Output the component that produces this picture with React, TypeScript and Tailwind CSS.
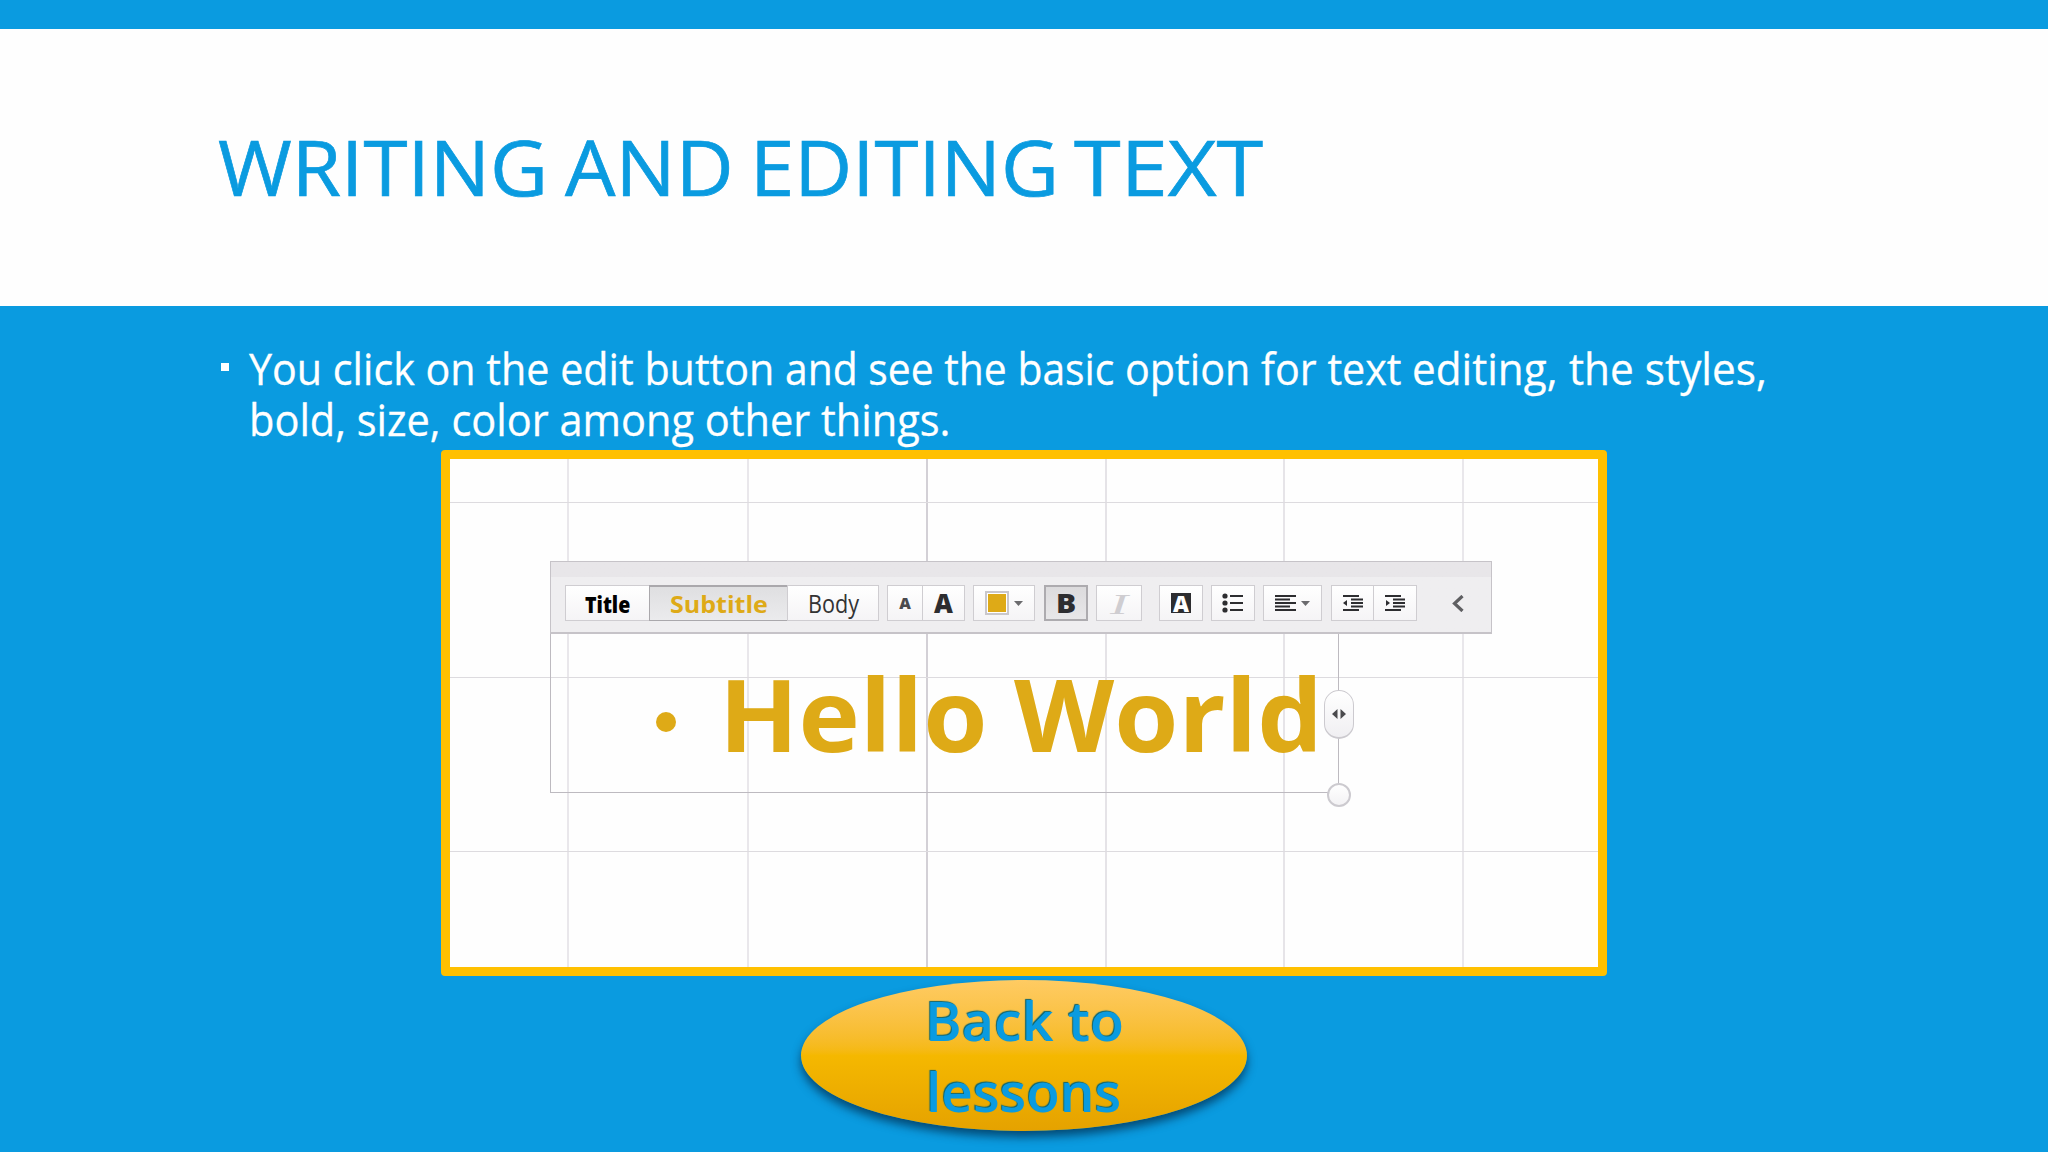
import { useLayoutEffect, useRef, useState } from "react";
import type { ReactNode } from "react";

/** A run of text stretched or condensed horizontally to an exact width. */
function Fit({ width, className = "", children }: { width: number; className?: string; children: ReactNode }) {
  const ref = useRef<HTMLSpanElement>(null);
  const [scale, setScale] = useState(1);
  useLayoutEffect(() => {
    const measure = () => {
      if (ref.current) setScale(width / ref.current.offsetWidth);
    };
    measure();
    document.fonts?.ready.then(measure);
  }, [width]);
  return (
    <span className="block shrink-0" style={{ width }}>
      <span ref={ref} className={`inline-block origin-left whitespace-nowrap ${className}`} style={{ transform: `scaleX(${scale})` }}>
        {children}
      </span>
    </span>
  );
}

const BTN = "flex h-full items-center justify-center border border-[#cfcdd1] bg-linear-to-b from-white to-[#f5f4f6]";
const VLINES = ["left-[117px] bg-[#e9e7eb]", "left-[297px] bg-[#e9e7eb]", "left-[476px] bg-[#d3d0d6]", "left-[655px] bg-[#e5e3e7]", "left-[833px] bg-[#e6e4e8]", "left-[1012px] bg-[#e9e7eb]"];
const HLINES = ["top-[43px]", "top-[218px]", "top-[392px]"];

function Toolbar() {
  return (
    <div className="absolute left-[100px] top-[102px] flex h-[73px] w-[942px] border border-[#c6c3c8] border-b-2 bg-linear-to-b from-[#e8e6e9] from-[21%] to-[#efeef0] to-[22%] pl-[14px] pt-[23px]">
      <div className="flex h-[36px] font-['Open_Sans'] text-[#2d2d30]">
        <div className={`${BTN} w-[85px]`}>
          <Fit width={45} className="translate-y-px text-[23px] font-extrabold text-black">Title</Fit>
        </div>
        <div className="-ml-px flex h-full w-[139px] items-center justify-center border border-t-2 border-[#aaa8ac] bg-linear-to-b from-[#dfdfe1] to-[#ebebed]">
          <Fit width={98} className="text-[24px] font-bold text-[#deaa17]">Subtitle</Fit>
        </div>
        <div className={`${BTN} -ml-px w-[92px]`}>
          <Fit width={51} className="translate-y-px text-[25px] text-[#333]">Body</Fit>
        </div>
        <div className={`${BTN} ml-[8px] w-[36px] text-[16px] font-extrabold text-[#4a4a4d]`}>A</div>
        <div className={`${BTN} -ml-px w-[43px] text-[26px] font-extrabold`}>A</div>
        <div className={`${BTN} ml-[8px] w-[62px] gap-[5px]`}>
          <div className="size-[24px] border-2 border-[#c9c7cb] bg-white p-px">
            <div className="size-full bg-[#deaa17]" />
          </div>
          <svg className="h-[5px] w-[9px]" viewBox="0 0 9 5"><path d="M0 0h9L4.5 5z" fill="#6b6b6e" /></svg>
        </div>
        <div className="ml-[9px] flex h-full w-[44px] items-center justify-center border-2 border-[#adabaf] bg-linear-to-b from-[#dcdbdd] to-[#e8e7e9]">
          <Fit width={20} className="text-[27px] font-extrabold">B</Fit>
        </div>
        <div className={`${BTN} ml-[8px] w-[46px]`}>
          <Fit width={18} className="font-['Liberation_Serif'] text-[30px] italic text-[#cfcdd1]">I</Fit>
        </div>
        <div className={`${BTN} ml-[17px] w-[44px]`}>
          <div className="flex size-[20px] items-center justify-center bg-[#2d2d30] text-[22px] leading-none font-extrabold text-white">A</div>
        </div>
        <div className={`${BTN} ml-[8px] w-[44px]`}>
          <svg className="h-[20px] w-[22px]" viewBox="0 0 22 20" stroke="#2d2d30" strokeWidth="2" fill="#2d2d30">
            <path d="M8 3h13M8 10h13M8 17h13" />
            <g stroke="none"><circle cx="3" cy="3" r="2.6" /><circle cx="3" cy="10" r="2.6" /><circle cx="3" cy="17" r="2.6" /></g>
          </svg>
        </div>
        <div className={`${BTN} ml-[8px] w-[59px] gap-[5px]`}>
          <svg className="h-[16px] w-[21px]" viewBox="0 0 21 16" stroke="#2d2d30" strokeWidth="1.8">
            <path d="M0 1h21M0 4.5h15M0 8h21M0 11.5h15M0 15h21" />
          </svg>
          <svg className="h-[5px] w-[9px]" viewBox="0 0 9 5"><path d="M0 0h9L4.5 5z" fill="#6b6b6e" /></svg>
        </div>
        <div className={`${BTN} ml-[9px] w-[43px]`}>
          <svg className="h-[16px] w-[22px]" viewBox="0 0 22 16" stroke="#2d2d30" strokeWidth="1.8">
            <path d="M1 1h16M9 4.5h12M9 8h12M9 11.5h12M1 15h16" />
            <path d="M5 5v6L1 8z" stroke="none" fill="#2d2d30" />
          </svg>
        </div>
        <div className={`${BTN} -ml-px w-[44px]`}>
          <svg className="h-[16px] w-[22px]" viewBox="0 0 22 16" stroke="#2d2d30" strokeWidth="1.8">
            <path d="M1 1h16M9 4.5h12M9 8h12M9 11.5h12M1 15h16" />
            <path d="M2 5v6l4-3z" stroke="none" fill="#2d2d30" />
          </svg>
        </div>
        <div className="ml-[35px] flex items-center">
          <svg className="h-[17px] w-[12px]" viewBox="0 0 12 17" fill="none" stroke="#5f5f62" strokeWidth="3.2"><path d="M10.500 1 2.500 8.500l8 7.500" /></svg>
        </div>
      </div>
    </div>
  );
}

function Editor() {
  return (
    <div className="relative ml-[441px] h-[526px] w-[1166px] shrink-0 overflow-hidden rounded-[4px] border-[9px] border-[#ffc000] bg-[#fefefe]">
      {VLINES.map((c) => <div key={c} className={`absolute inset-y-0 w-[2px] ${c}`} />)}
      {HLINES.map((c) => <div key={c} className={`absolute inset-x-0 h-px bg-[#dddbdf] ${c}`} />)}
      <div className="absolute left-[100px] top-[174px] h-[160px] w-[789px] border border-[#bdbac0]" />
      <div className="absolute left-[206px] top-[253px] size-[20px] rounded-full bg-[#deaa17]" />
      <div className="absolute left-[269px] top-[185px] flex font-['Open_Sans'] text-[101px] leading-[138px] font-bold text-[#deaa17]">
        <Fit width={295}>Hello&nbsp;</Fit>
        <Fit width={309}>World</Fit>
      </div>
      <Toolbar />
      <div className="absolute left-[874px] top-[231px] flex h-[49px] w-[30px] items-center justify-center rounded-full border border-b-2 border-[#cccacf] bg-linear-to-b from-white to-[#f0eff2]">
        <svg className="h-[10px] w-[14px]" viewBox="0 0 14 10" fill="#4a4a4d"><path d="M5.500 0v10L0 5zM8.500 0v10L14 5z" /></svg>
      </div>
      <div className="absolute left-[877px] top-[324px] size-[24px] rounded-full border-2 border-[#cccacf] bg-linear-to-b from-white to-[#f3f2f4]" />
    </div>
  );
}

export default function App() {
  return (
    <main className="flex h-[1152px] w-[2048px] flex-col overflow-hidden bg-[#0a9be0] font-['Open_Sans',sans-serif]">
      <header className="mt-[29px] h-[277px] shrink-0 bg-[#fefefe] pl-[218px] pt-[84px]">
        <h1 className="flex text-[77.5px] leading-[106px] text-[#0a9be0] [-webkit-text-stroke:0.7px_#0a9be0]">
          <Fit width={330}>WRITING</Fit>
          <Fit width={17}>&nbsp;</Fit>
          <Fit width={169}>AND</Fit>
          <Fit width={16}>&nbsp;</Fit>
          <Fit width={309}>EDITING</Fit>
          <Fit width={15}>&nbsp;</Fit>
          <Fit width={189}>TEXT</Fit>
        </h1>
      </header>
      <section className="flex h-[144px] shrink-0 pl-[221px] pt-[37px] text-[43px] leading-[51px] text-white [-webkit-text-stroke:0.3px_white]">
        <div className="mt-[20px] mr-[20px] size-[8px] bg-white" />
        <div>
          <p className="flex">
            <Fit width={536}>You click on the edit button&nbsp;</Fit>
            <Fit width={340}>and see the basic&nbsp;</Fit>
            <Fit width={287}>option for text&nbsp;</Fit>
            <Fit width={157}>editing,&nbsp;</Fit>
            <Fit width={198}>the styles,</Fit>
          </p>
          <Fit width={702}>bold, size, color among other things.</Fit>
        </div>
      </section>
      <Editor />
      <button className="mt-[4px] ml-[801px] flex h-[151px] w-[446px] shrink-0 flex-col items-center justify-center rounded-[50%] bg-linear-to-b from-[#ffcb62] via-[#f5b800] via-50% to-[#e5a200] pr-[4px] text-[54px] leading-[71px] font-semibold text-[#0a9be0] shadow-[0_6px_10px_rgba(0,30,60,0.65)] [text-shadow:-1px_-1px_1px_#0b6470]">
        <Fit width={199}>Back to</Fit>
        <Fit width={195}>lessons</Fit>
      </button>
    </main>
  );
}
